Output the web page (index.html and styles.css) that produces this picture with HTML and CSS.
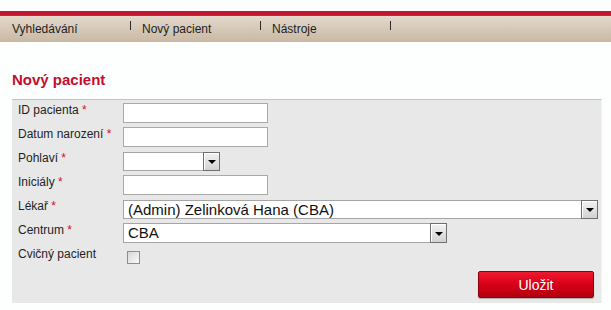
FILE: index.html
```html
<!DOCTYPE html>
<html lang="cs">
<head>
<meta charset="utf-8">
<title>Nový pacient</title>
<link rel="stylesheet" href="styles.css">
</head>
<body>
<div class="top-gap"></div>
<nav class="menu">
  <div class="menu-item"><span class="menu-link">Vyhledávání</span><span class="menu-sep"></span></div>
  <div class="menu-item"><span class="menu-link">Nový pacient</span><span class="menu-sep"></span></div>
  <div class="menu-item"><span class="menu-link">Nástroje</span><span class="menu-sep"></span></div>
</nav>
<main class="content">
  <h1 class="title">Nový pacient</h1>
  <form class="panel">
    <div class="row">
      <label class="label">ID pacienta <span class="req">*</span></label>
      <span class="field"><span class="input"></span></span>
    </div>
    <div class="row">
      <label class="label">Datum narození <span class="req">*</span></label>
      <span class="field"><span class="input"></span></span>
    </div>
    <div class="row">
      <label class="label">Pohlaví <span class="req">*</span></label>
      <span class="field"><span class="select select-sm"><span class="select-text"></span><span class="select-btn"><span class="tri"></span></span></span></span>
    </div>
    <div class="row">
      <label class="label">Iniciály <span class="req">*</span></label>
      <span class="field"><span class="input"></span></span>
    </div>
    <div class="row">
      <label class="label">Lékař <span class="req">*</span></label>
      <span class="field"><span class="select select-lg"><span class="select-text">(Admin) Zelinková Hana (CBA)</span><span class="select-btn"><span class="tri"></span></span></span></span>
    </div>
    <div class="row">
      <label class="label">Centrum <span class="req">*</span></label>
      <span class="field"><span class="select select-md"><span class="select-text">CBA</span><span class="select-btn"><span class="tri"></span></span></span></span>
    </div>
    <div class="row">
      <label class="label">Cvičný pacient</label>
      <span class="field"><span class="checkbox"></span></span>
    </div>
    <div class="actions">
      <button type="button" class="btn-save">Uložit</button>
    </div>
  </form>
</main>
</body>
</html>
```

FILE: styles.css
```css
html, body {
  margin: 0;
  padding: 0;
  background: #fdfefe;
  font-family: "Liberation Sans", Arial, sans-serif;
  color: #222;
}

.top-gap {
  height: 11px;
}

.menu {
  display: flex;
  height: 27px;
  padding-left: 12px;
  border-top: 4px solid #c4162f;
  background: linear-gradient(#e4dace, #c9b8a3);
  box-shadow: inset 0 1px 0 #9c3a3e;
}

.menu-item {
  display: flex;
  width: 130px;
  padding-right: 11px;
  box-sizing: border-box;
  align-items: center;
  font-size: 12px;
  color: #1e1e1e;
}

.menu-link {
  flex: 1;
  line-height: 14px;
  padding-top: 1px;
}

.menu-sep {
  align-self: flex-start;
  width: 1px;
  height: 9px;
  margin-top: 6px;
  background: #2a2a2a;
}

.content {
  padding: 0 0 0 12px;
}

.title {
  margin: 29px 0 11px;
  font-size: 15px;
  line-height: 17px;
  font-weight: bold;
  color: #c20e2c;
}

.panel {
  width: 590px;
  box-sizing: border-box;
  background: #e8e8e8;
  border-top: 1px solid #c3c3c3;
  border-right: 1px solid #f3f3f3;
  padding: 1px 6px 5px 6px;
}

.row {
  display: grid;
  grid-template-columns: 105px 1fr;
  height: 24px;
  align-items: center;
}

.label {
  align-self: start;
  padding-top: 2px;
  font-size: 12px;
  line-height: 14px;
  color: #1f1f1f;
}

.req {
  color: #d0102a;
}

.field {
  display: flex;
  align-items: center;
}

.input {
  display: block;
  width: 145px;
  height: 20px;
  box-sizing: border-box;
  background: #fff;
  border: 1px solid #a9a9a9;
}

.select {
  display: flex;
  height: 19px;
  box-sizing: border-box;
  background: #fff;
  border: 1px solid #a5a5a5;
}

.select-sm { width: 97px; }
.select-md { width: 324px; height: 20px; }
.select-lg { width: 475px; }

.select-text {
  flex: 1;
  padding-left: 4px;
  font-size: 15px;
  line-height: 17px;
  color: #111;
  white-space: nowrap;
  overflow: hidden;
}

.select-btn {
  display: flex;
  align-items: center;
  justify-content: center;
  width: 17px;
  margin: -1px -1px -1px 0;
  box-sizing: border-box;
  border: 1px solid #6f6f6f;
  background: linear-gradient(#f2f2f2, #d2d2d2);
  box-shadow: inset 1px 1px 0 #fff;
}

.tri {
  width: 0;
  height: 0;
  margin-top: 2px;
  border-left: 4px solid transparent;
  border-right: 4px solid transparent;
  border-top: 4px solid #000;
}

.checkbox {
  display: block;
  width: 13px;
  height: 13px;
  margin-left: 4px;
  box-sizing: border-box;
  border: 1px solid #8e8e8e;
  background: linear-gradient(135deg, #d6d6d6, #fbfbfb);
}

.actions {
  display: flex;
  justify-content: flex-end;
  margin-top: 2px;
  padding-right: 1px;
}

.btn-save {
  width: 116px;
  height: 27px;
  border: 1px solid #8d0012;
  border-radius: 2px;
  background: linear-gradient(#ee1a2f, #d80018 50%, #b0000f);
  box-shadow: 0 1px 1px rgba(0,0,0,0.25);
  color: #fff;
  font-family: "Liberation Sans", Arial, sans-serif;
  font-size: 14px;
  line-height: 16px;
  padding: 0;
}
```
